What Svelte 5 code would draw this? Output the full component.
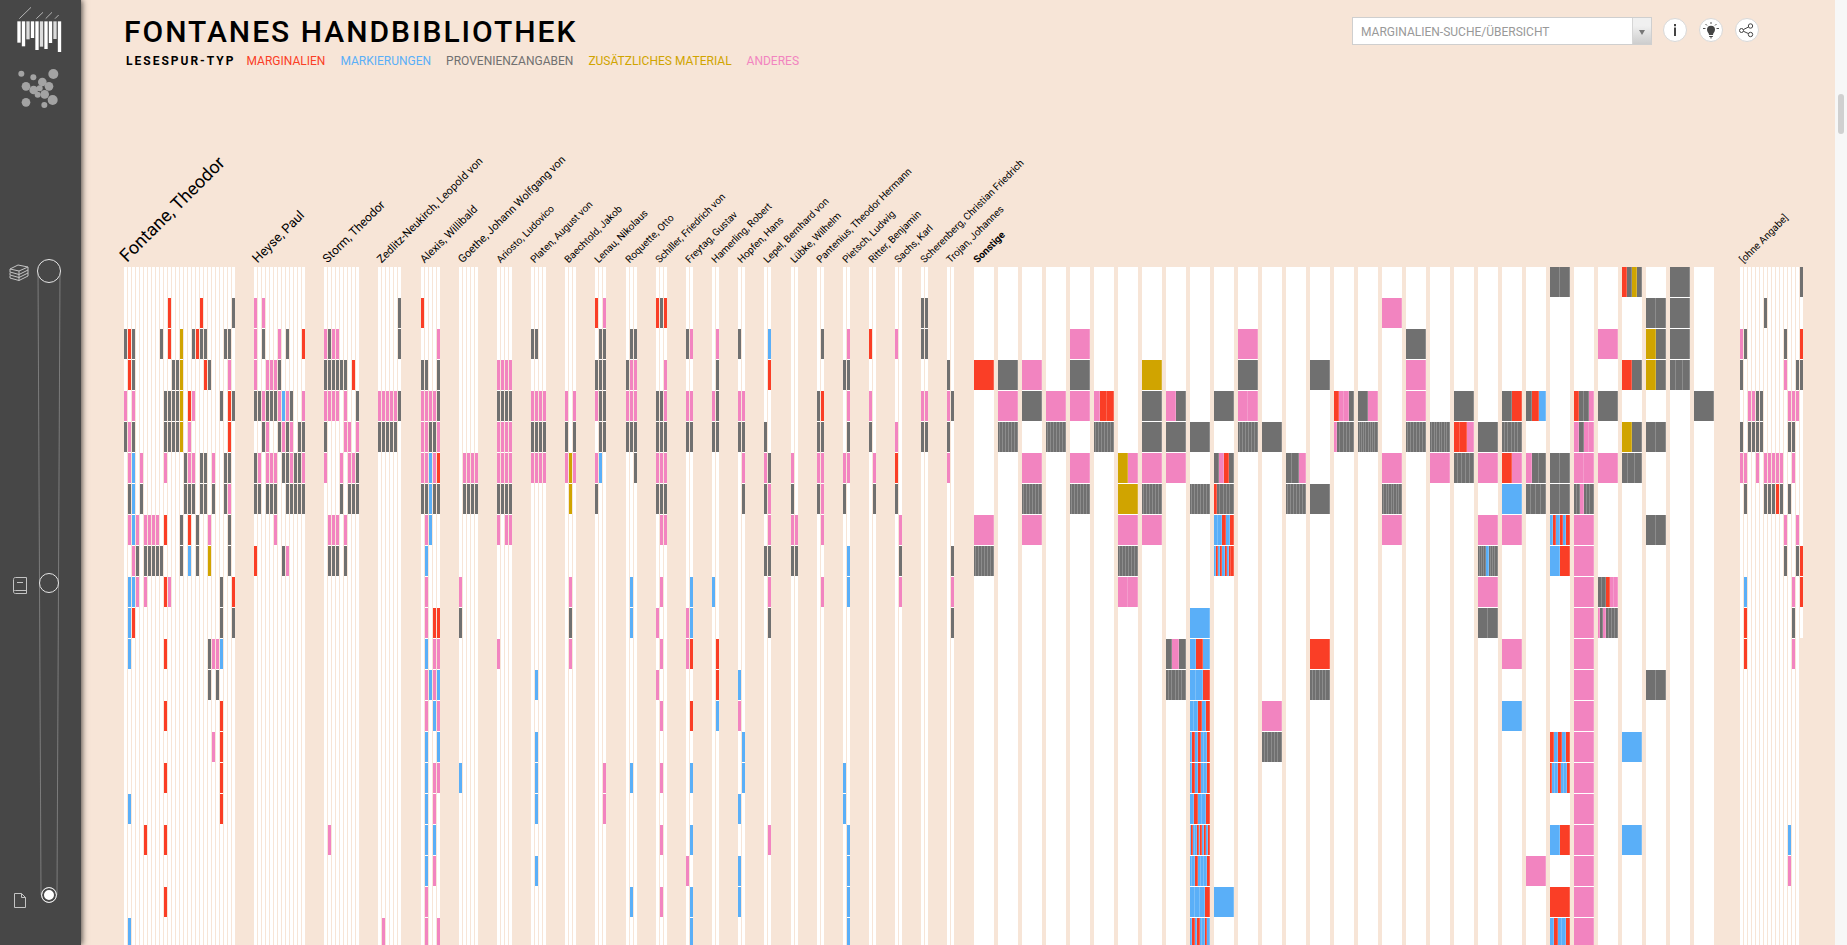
<script>
  const colours = { r: 'red', b: 'blue', g: 'grey', y: 'gold', p: 'pink' };
  const ROWS = 22;

  // Each author: name, number of volumes, label size, then one entry per row: "<volume><colour> ..."
  const authors = [
    ['Fontane, Theodor', 28, 'xl', {
      1: '11r 19r 27g',
      2: '0g 1r 2g 9g 11r 14y 17g 18r 19g 20g 25g 26g',
      3: '1r 2g 12g 13g 14y 20r 21g 26p',
      4: '0p 2p 10g 11g 12g 13g 14y 16r 17p 24g 26r 27g',
      5: '0g 1p 2g 10g 11g 12g 13g 14y 16p 26r',
      6: '1p 2b 4p 10p 15g 16p 17p 19g 20g 22p 25g 26g',
      7: '1g 2b 4g 15g 16g 17g 19g 20g 22g 25g 26p',
      8: '1p 2b 3p 5p 6p 7p 8p 10r 14g 16r 18g 21p 26g',
      9: '2p 3g 5g 6g 7g 8g 9g 14g 16b 18g 21y 26g',
      10: '1b 2b 3p 5p 10r 11p 24g 27r',
      11: '1b 2r 24g 27g', 12: '1b 10r 21g 22p 23p 24b', 13: '21g 23g',
      14: '10r 24r', 15: '22p 24r', 16: '10r 24r', 17: '1b 24r', 18: '5r 10r', 20: '10r', 21: '1b'
    }],
    ['Heyse, Paul', 13, 'l', {
      1: '0p 2p', 2: '0p 2g 6p 8g 12r', 3: '0p 3p 4p 5p 6g',
      4: '0g 1g 2p 3g 4g 5g 6p 7b 8p 9g 12p', 5: '2g 3p 6g 7p 8g 9p 11g 12g',
      6: '0g 1p 3p 4p 5p 7g 8g 9p 10g 11g 12p', 7: '0g 1g 3g 4g 5g 8g 9g 10g 11g 12g',
      8: '5p', 9: '0r 7g 8p'
    }],
    ['Storm, Theodor', 9, 'm', {
      2: '0p 1g 2p 3p', 3: '0g 1g 2g 3g 4g 5g 7r', 4: '0p 1p 2p 3p 5p 8g', 5: '0g 5p 6p 8p',
      6: '0p 4p 6p 7p 8g', 7: '4g 6g 7g 8g', 8: '1p 2p 3p 5p', 9: '1g 2g 3g 5g', 18: '1p'
    }],
    ['Zedlitz-Neukirch, Leopold von', 6, 'sm', {
      1: '5g', 2: '5g', 4: '0p 1p 2p 3p 4p 5g', 5: '0g 1g 2g 3g 4g', 21: '1p'
    }],
    ['Alexis, Willibald', 5, 'sm', {
      1: '0r', 2: '4p', 3: '0g 1g 4g', 4: '0p 1p 2p 3p 4g', 5: '0p 1p 2g 3g 4p', 6: '0p 1p 2b 3p 4r',
      7: '0g 1g 2b 3g 4g', 8: '1p 2b', 9: '1b', 10: '1p', 11: '1p 3r 4r', 12: '1b 3p 4p',
      13: '1p 2b 3p 4b', 14: '1p 3b 4p', 15: '1b 4b', 16: '1b 3p 4p', 17: '1b 3p', 18: '1b 3b',
      19: '1b 3p', 20: '1p', 21: '1p 4p'
    }],
    ['Goethe, Johann Wolfgang von', 5, 'sm', { 6: '1p 2p 3p 4p', 7: '1g 2g 3g 4g', 10: '0p', 11: '0g', 16: '0b' }],
    ['Ariosto, Ludovico', 4, 's', {
      3: '0p 1p 2p 3p', 4: '0g 1g 2g 3g', 5: '0p 1p 2p 3p', 6: '0p 1p 2p 3p', 7: '0g 1g 2g 3g', 8: '0p 2p 3p', 12: '0p'
    }],
    ['Platen, August von', 4, 's', {
      2: '0g 1g', 4: '0p 1p 2p 3p', 5: '0g 1g 2g 3g', 6: '0p 1p 2p 3p', 13: '1b', 15: '1b', 16: '1b', 17: '1b', 19: '1b'
    }],
    ['Baechtold, Jakob', 3, 's', { 4: '0p 2p', 5: '0g 2g', 6: '0p 1y 2p', 7: '1y', 10: '1p', 11: '1g', 12: '1p' }],
    ['Lenau, Nikolaus', 3, 's', {
      1: '0r 2p', 2: '1g 2g', 3: '0g 1g 2g', 4: '0p 1g 2g', 5: '1g 2g', 6: '0p 1b', 7: '0g', 16: '2p', 17: '2p'
    }],
    ['Roquette, Otto', 3, 's', {
      2: '1g 2g', 3: '0g 1p 2p', 4: '0p 1p 2p', 5: '0g 1g 2g', 6: '2g', 10: '1b', 11: '1b', 16: '1b', 20: '1b'
    }],
    ['Schiller, Friedrich von', 3, 's', {
      1: '0r 1g 2r', 3: '2p', 4: '0g 1g 2p', 5: '0g 1g 2g', 6: '0p 1p 2p', 7: '0g 1g 2g', 8: '1p 2p', 10: '1p',
      11: '0p', 12: '1p', 13: '0p', 14: '1p', 16: '1p', 18: '1p', 20: '1p'
    }],
    ['Freytag, Gustav', 2, 's', {
      2: '0g 1p', 4: '0p 1p', 5: '0g 1g', 10: '1b', 11: '0p 1b', 12: '0p 1r', 14: '1r', 16: '1b', 18: '1b',
      19: '0p', 20: '1b', 21: '1b'
    }],
    ['Hamerling, Robert', 2, 's', { 2: '1p', 3: '1g', 4: '0p 1g', 5: '0g 1g', 10: '0b', 12: '1r', 13: '1r', 14: '1b' }],
    ['Hopfen, Hans', 2, 's', {
      2: '0g', 4: '0p 1p', 5: '0g 1g', 6: '1p', 7: '1g', 13: '0b', 14: '0p', 15: '1b', 16: '1b', 17: '0b', 19: '0b', 20: '0b'
    }],
    ['Lepel, Bernhard von', 2, 's', {
      2: '1b', 3: '1r', 5: '0g', 6: '0p 1g', 7: '0g 1p', 8: '1p', 9: '0g 1g', 10: '1p', 11: '1g', 18: '1p'
    }],
    ['Lübke, Wilhelm', 2, 's', { 6: '0p', 7: '0g', 8: '0p 1p', 9: '0g 1g' }],
    ['Pantenius, Theodor Hermann', 2, 's', { 2: '1g', 4: '0g 1r', 5: '0g 1g', 6: '0p 1p', 7: '0g 1p', 8: '1p', 10: '1p' }],
    ['Pietsch, Ludwig', 2, 's', {
      2: '1p', 3: '0g 1g', 4: '1p', 5: '1g', 6: '0p 1p', 7: '0g', 9: '1b', 10: '1b', 16: '0b', 17: '0b',
      18: '1b', 19: '1b', 20: '1b', 21: '1b'
    }],
    ['Ritter, Benjamin', 2, 's', { 2: '0r', 4: '0p', 5: '0g', 6: '1p', 7: '1g' }],
    ['Sachs, Karl', 2, 's', { 2: '0p', 5: '0p', 6: '0r', 7: '0g', 8: '1p', 9: '1g', 10: '1p' }],
    ['Scherenberg, Christian Friedrich', 2, 's', { 1: '0g 1g', 2: '0g 1g', 4: '0p 1p', 5: '0g 1g' }],
    ['Trojan, Johannes', 2, 's', { 3: '0g', 4: '0p 1g', 5: '0g', 6: '0p', 9: '1g', 10: '1p', 11: '1g' }]
  ];

  const unnamed = ['[ohne Angabe]', 16, 's', {
    0: '15g', 1: '6g', 2: '0p 1g 11g 15r', 3: '0g 11p 14g 15g', 4: '2p 3p 4g 5g 12p 13p 14p',
    5: '0g 2g 3g 4g 5g 12g 13g', 6: '0p 1p 4p 6p 7p 8p 9p 10p 13p', 7: '1g 6g 7g 8g 9r 10g 12g',
    8: '11p 14p', 9: '11g 14g 15r', 10: '1b 13p 15r', 11: '1r 13g', 12: '1r 13p', 18: '12b', 19: '12p'
  }];

  // Collected authors: one wide column each, "<row>:<colours side by side>"
  const collected = [
    '3:r 8:p 9:ggggggg', '3:g 4:p 5:ggggggg', '3:p 4:g 6:p 7:ggggggg 8:p', '4:p 5:ggggggg',
    '2:p 3:g 4:p 6:p 7:ggggggg', '4:prr 5:ggggggg', '6:yp 7:y 8:p 9:ggggggg 10:pp',
    '3:y 4:g 5:g 6:p 7:ggggggg 8:p', '4:pg 5:g 6:p 12:gpg 13:gggggg',
    '5:g 7:ggggggg 11:b 12:brb 13:bbr 14:bbrbr 15:brbrbbr 16:brbrbbr 17:brbbr 18:brbbrbrbrbr 19:bbrbbbr 20:bbbr 21:brbrbbrb',
    '4:g 6:gprg 7:rggggg 8:bbrbr 9:brbrbrbrr 20:b', '2:p 3:g 4:pp 5:ggggggg', '5:g 14:p 15:gggggg',
    '6:ggp 7:ggggggg', '3:g 7:g 12:r 13:gggggg', '4:rppg 5:pggggg', '4:gp 5:ggggggggg',
    '1:p 6:p 7:gggggggg 8:p', '2:g 3:p 4:p 5:ggggggg', '5:gggggggg 6:p', '4:g 5:rrp 6:ggggg',
    '5:g 6:p 8:p 9:ggggbgggg 10:p 11:gg', '4:gr 5:gggggg 6:rp 7:b 8:p 12:p 14:b',
    '4:grb 6:pgg 7:gggg 19:p', '0:gg 6:gg 7:gg 8:brbrbr 9:br 15:rbrbr 16:rbbrbbr 18:br 20:r 21:brbbr',
    '4:rggp 5:pgpp 6:pp 7:ggpggg 8:p 9:p 10:p 11:p 12:p 13:p 14:p 15:p 16:p 17:p 18:p 19:p 20:p 21:p',
    '2:p 4:g 6:p 10:ggrpp 11:pgpgggg', '0:rgyg 3:rg 5:yg 6:ggg 15:b 18:b',
    '1:gg 2:yg 3:yg 5:gg 8:gg 13:gg', '0:g 1:g 2:g 3:ggg', '4:g'
  ].map((column) => column.split(' ').map((cell) => {
    const [row, parts] = cell.split(':');
    return { row: +row, parts: [...parts].map((c) => colours[c]) };
  }));

  function toGroup([name, count, size, rows]) {
    const volumes = Array.from({ length: count }, () => []);
    for (const [row, line] of Object.entries(rows)) {
      for (const mark of line.split(' ')) {
        volumes[parseInt(mark)].push({ row: +row, colour: colours[mark.at(-1)] });
      }
    }
    return { name, size, volumes };
  }

  const groups = authors.map(toGroup);
  const last = toGroup(unnamed);

  const legend = [
    ['MARGINALIEN', 'red'], ['MARKIERUNGEN', 'blue'], ['PROVENIENZANGABEN', 'grey'],
    ['ZUSÄTZLICHES MATERIAL', 'gold'], ['ANDERES', 'pink']
  ];
  const dots = [
    [64, 221, 9], [100, 232, 9], [160, 222, 15], [127, 246, 13], [147, 259, 13], [78, 259, 13], [101, 270, 13],
    [119, 265, 9], [113, 284, 9], [134, 283, 13], [158, 300, 15], [78, 307, 13], [133, 315, 9]
  ];
  const bars = [128, 139, 118, 114, 150, 140, 147, 129, 117, 156];
  let level = $state('page');
</script>

{#snippet volumeGroup(group, shortLast)}
  <section class="group">
    <h2 class="label {group.size}"><span>{group.name}</span></h2>
    <div class="volumes">
      {#each group.volumes as marks, i}
        <div class="volume" style:grid-template-rows="repeat({shortLast && i === group.volumes.length - 1 ? 12 : ROWS}, 30px)">
          {#each marks as mark}
            <i class="bg-{mark.colour}" style:grid-row={mark.row + 1}></i>
          {/each}
        </div>
      {/each}
    </div>
  </section>
{/snippet}

<div class="app">
  <aside class="side">
    <nav>
      <a href="#bibliothek" aria-label="Bibliothek">
        <svg width="48" height="48" viewBox="48 12 144 144">
          {#each bars as end, i}
            <rect x={52 + i * 13.5} y="64" width="10" height={end - 64} fill={i % 3 === 2 ? '#dcdcdc' : '#fff'} />
          {/each}
          <path d="M58 56L93 22M109 56L129 37M137 56L156 37M165 56L176 45" stroke="#b5b5b5" stroke-width="3" fill="none" />
        </svg>
      </a>
      <a href="#netzwerk" aria-label="Netzwerk">
        <svg width="48" height="48" viewBox="48 192 144 144">
          {#each dots as [x, y, r]}<circle cx={x} cy={y} {r} fill="#a3a3a3" />{/each}
        </svg>
      </a>
    </nav>
    <div class="levels" role="radiogroup" aria-label="Ebene">
      <svg class="track" viewBox="0 0 26 100" preserveAspectRatio="none">
        <path d="M2 0L5 100M24 0L21 100" vector-effect="non-scaling-stroke" />
      </svg>
      <label>
        <svg width="20" height="28" viewBox="0 0 20 28">
          <path d="M1 12L9 8L19 10L10 14ZM1 12V15L10 17.500L19 13V10M1 15.500V18L10 20.500L19 16V13M1 18.500V21L10 23.500L19 19V16M10 14V23.500" />
        </svg>
        <span class="slot"><input type="radio" name="level" value="author" bind:group={level} class="large" aria-label="Autoren" /></span>
      </label>
      <label>
        <svg width="20" height="28" viewBox="0 0 20 28">
          <path d="M6.500 8.500H17.500V24.500H6.500C5 24.500 4.500 23.500 4.500 22.500V10.500C4.500 9.500 5 8.500 6.500 8.500ZM4.500 22.500C5 21.500 5.500 21.500 6.500 21.500H17.500M8 13.500H14" />
        </svg>
        <span class="slot"><input type="radio" name="level" value="book" bind:group={level} class="medium" aria-label="Bücher" /></span>
      </label>
      <label>
        <svg width="20" height="28" viewBox="0 0 20 28">
          <path d="M5.500 12.500H12.500L16.500 16.500V26.500H5.500ZM12.500 12.500V16.500H16.500" />
        </svg>
        <span class="slot"><input type="radio" name="level" value="page" bind:group={level} class="small" aria-label="Seiten" /></span>
      </label>
    </div>
  </aside>

  <main>
    <header>
      <div>
        <h1>FONTANES HANDBIBLIOTHEK</h1>
        <div class="legend">
          <strong>LESESPUR-TYP</strong>
          {#each legend as [text, colour]}
            <a href="#{colour}" class="fg-{colour}">{text}</a>
          {/each}
        </div>
      </div>
      <div class="tools">
        <div class="combo">
          <input type="text" placeholder="MARGINALIEN-SUCHE/ÜBERSICHT" aria-label="Marginalien-Suche" />
          <button aria-label="Liste öffnen"><svg width="6" height="5" viewBox="0 0 6 5"><path d="M0 0H6L3 5Z" fill="#777" /></svg></button>
        </div>
        <button class="round" aria-label="Information">
          <svg width="22" height="22" viewBox="0 0 22 22"><path d="M10 5H12V7.200H10ZM10 8.600H12V17H10Z" fill="#444" /></svg>
        </button>
        <button class="round" aria-label="Hinweise">
          <svg width="22" height="22" viewBox="0 0 22 22">
            <path d="M11 6.800A4 4 0 0 0 7 10.800C7 13 9 14 9 16H13C13 14 15 13 15 10.800A4 4 0 0 0 11 6.800ZM9.200 17H12.800V18H9.200ZM10 18.500H12V19.300H10Z" fill="#444" />
            <path d="M11 3V5M5.500 5L7 6.500M16.500 5L15 6.500M3 9.500H5.500M16.500 9.500H19" stroke="#555" fill="none" />
          </svg>
        </button>
        <button class="round" aria-label="Teilen">
          <svg width="22" height="22" viewBox="0 0 22 22" fill="none" stroke="#444">
            <circle cx="5.500" cy="11.500" r="2" /><circle cx="14.500" cy="7" r="2.200" /><circle cx="14.500" cy="15.500" r="2.200" />
            <path d="M7.500 10.500L12.500 8M7.500 12.300L12.500 14.600" />
          </svg>
        </button>
      </div>
    </header>

    <div class="chart">
      {#each groups as group}
        {@render volumeGroup(group, false)}
      {/each}
      <section class="group collected">
        <h2 class="label s strong"><span>Sonstige</span></h2>
        <div class="columns">
          {#each collected as cells}
            <div class="column" style:grid-template-rows="repeat({ROWS}, 30px)">
              {#each cells as cell}
                <div class="cell" style:grid-row={cell.row + 1}>
                  {#each cell.parts as colour}<i class="bg-{colour}"></i>{/each}
                </div>
              {/each}
            </div>
          {/each}
        </div>
      </section>
      {@render volumeGroup(last, true)}
    </div>
  </main>

  <div class="scroll" aria-hidden="true"><div class="thumb"></div></div>
</div>

<style>
  :global(body) { margin: 0; }
  .app {
    display: grid;
    grid-template-columns: 81px minmax(0, 1fr) 12px;
    height: 100vh;
    overflow: hidden;
    background: #f7e5d7;
    color: #000;
    font-family: Roboto, sans-serif;
    font-size: 12px;
  }
  .side {
    display: flex;
    flex-direction: column;
    justify-content: space-between;
    box-sizing: border-box;
    padding: 4px 0 36px;
    background: #474747;
    box-shadow: 1px 0 6px rgba(0, 0, 0, 0.7);
    z-index: 1;
  }
  nav { display: flex; flex-direction: column; align-items: flex-start; gap: 12px; padding-left: 16px; }
  nav a, nav svg { display: block; }
  .levels {
    position: relative;
    display: flex;
    flex-direction: column;
    justify-content: space-between;
    height: calc(100vh - 293px);
    padding-left: 9px;
  }
  .levels label { display: flex; align-items: center; gap: 7px; height: 28px; }
  .levels label svg { fill: none; stroke: #c4c4c4; stroke-width: 1; }
  .slot { position: relative; display: flex; justify-content: center; width: 26px; }
  .levels input {
    appearance: none;
    margin: 0;
    box-sizing: border-box;
    border: 1px solid #e6e6e6;
    border-radius: 50%;
    background: #474747;
  }
  .levels .large { width: 24px; height: 24px; }
  .levels .medium { width: 20px; height: 20px; }
  .levels .small { width: 16px; height: 16px; }
  .levels input:checked { background: #fff; box-shadow: inset 0 0 0 2px #474747; }
  .track { position: absolute; left: 36px; top: 14px; width: 26px; height: calc(100% - 28px); }
  .track path { fill: none; stroke: #7c7c7c; stroke-width: 1; }

  main { min-width: 0; overflow: hidden; padding-left: 43px; }
  header { display: flex; justify-content: space-between; box-sizing: border-box; height: 70px; padding: 14px 76px 0 0; }
  h1 { margin: 0; font-size: 30px; line-height: 36px; font-weight: 500; letter-spacing: 2px; }
  .legend { display: flex; gap: 15px; padding: 1px 0 0 2px; line-height: 20px; }
  .legend strong { letter-spacing: 2px; margin-right: -4px; }
  .legend a { text-decoration: none; }

  .tools { display: flex; align-items: flex-start; gap: 12px; padding-top: 3px; }
  .combo { display: flex; box-sizing: border-box; width: 300px; height: 28px; margin-right: -1px; border: 1px solid #cfcfcf; background: #fff; }
  .combo input {
    flex: 1;
    min-width: 0;
    padding: 1px 8px 0;
    border: 0;
    background: none;
    font: 12px Roboto, sans-serif;
    color: #444;
  }
  .combo input::placeholder { color: #999; opacity: 1; }
  .combo button {
    display: grid;
    place-items: center;
    width: 19px;
    padding: 2px 0 0;
    border: 0;
    border-left: 1px solid #d6d6d6;
    background: linear-gradient(#f0f0f0 30%, #cdcdcd);
  }
  .round {
    width: 24px;
    height: 24px;
    margin-top: 1px;
    padding: 0;
    border: 1px solid #d8d8d8;
    border-radius: 50%;
    background: #fff;
  }
  .round svg { display: block; }

  .chart { display: flex; justify-content: space-between; padding-right: 32px; }
  .label {
    display: flex;
    align-items: flex-end;
    box-sizing: border-box;
    width: 0;
    height: 197px;
    margin: 0;
    padding-bottom: 2px;
    font-weight: 400;
    line-height: 1;
    white-space: nowrap;
  }
  .label span { margin-left: 5px; transform: rotate(-45deg); transform-origin: 0 100%; }
  .xl { font-size: 18px; }
  .l { font-size: 13px; }
  .m { font-size: 12px; }
  .sm { font-size: 11px; }
  .s { font-size: 10px; }
  .strong { font-weight: 700; }
  .volumes { display: flex; align-items: flex-start; gap: 1px; }
  .volume, .column { display: grid; grid-auto-columns: 100%; row-gap: 1px; background: #fff; }
  .volume { width: 3px; }
  .collected { padding-right: 7px; }
  .columns { display: flex; gap: 4px; }
  .column { width: 20px; }
  .cell { display: flex; }
  .cell i { flex: 1; box-sizing: border-box; border-right: 1px solid rgba(255, 255, 255, 0.2); }

  .bg-red { background: #fa3e26; }
  .bg-blue { background: #5aaff8; }
  .bg-grey { background: #707070; }
  .bg-gold { background: #d0a400; }
  .bg-pink { background: #f284c0; }
  .fg-red { color: #fa3e26; }
  .fg-blue { color: #5aaff8; }
  .fg-grey { color: #707070; }
  .fg-gold { color: #d0a400; }
  .fg-pink { color: #f284c0; }

  .scroll { background: #f7f7f7; }
  .thumb { width: 6px; height: 40px; margin: 94px 0 0 3px; border-radius: 3px; background: #d0d0d0; }
</style>
